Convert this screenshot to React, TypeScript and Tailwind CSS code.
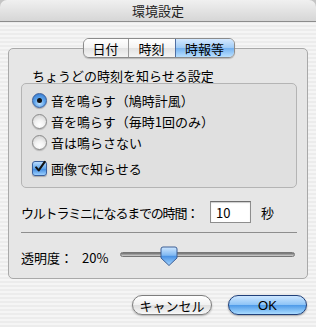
import React from "react"

const font = { fontFamily: '"Noto Sans CJK JP", "Liberation Sans", sans-serif' }

function Radio({ checked, label }: { checked?: boolean; label: string }) {
  return (
    <div className="flex items-center gap-[4px] h-[21px]">
      {checked ? (
        <span className="w-[15px] h-[15px] rounded-full border border-[#3a5f9c] bg-[radial-gradient(circle_at_50%_70%,#c8e6ff_0%,#5fa4ea_45%,#2a6fc9_100%)] flex items-center justify-center shadow-[0_1px_1px_rgba(0,0,0,0.25)]">
          <span className="w-[5px] h-[5px] rounded-full bg-[#111]" />
        </span>
      ) : (
        <span className="w-[15px] h-[15px] rounded-full border border-[#8a8a8a] bg-[radial-gradient(circle_at_50%_75%,#ffffff_0%,#f2f2f2_40%,#c9c9c9_100%)] shadow-[0_1px_1px_rgba(0,0,0,0.2)]" />
      )}
      <span className="text-[13px] text-black leading-none whitespace-nowrap">{label}</span>
    </div>
  )
}

export default function App() {
  return (
    <div style={font} className="w-[316px] h-[327px] flex flex-col bg-[#c4c4c4] overflow-hidden">
      {/* Title bar */}
      <div className="h-[22px] shrink-0 rounded-t-[7px] bg-[linear-gradient(#f0f0f0,#d6d6d6)] border-b border-[#8c8c8c] flex items-center justify-center">
        <span className="text-[13px] text-[#222] leading-none">環境設定</span>
      </div>

      {/* Body */}
      <div className="flex-1 flex flex-col bg-[repeating-linear-gradient(0deg,#ececec_0px,#ececec_2px,#f5f5f5_2px,#f5f5f5_4px)] px-[8px] pt-[16px]">
        {/* Tabs */}
        <div className="relative z-10 flex justify-center">
          <div className="flex h-[20px] rounded-[6px] border border-[#8b8b8b] overflow-hidden shadow-[0_1px_1px_rgba(0,0,0,0.2)] text-[13px] leading-none ml-[1px]">
            <div className="w-[45px] flex items-center justify-center bg-[linear-gradient(#ffffff,#f3f3f3_50%,#e2e2e2_51%,#f4f4f4)] border-r border-[#9a9a9a]">日付</div>
            <div className="w-[47px] flex items-center justify-center bg-[linear-gradient(#ffffff,#f3f3f3_50%,#e2e2e2_51%,#f4f4f4)] border-r border-[#4f6fa3]">時刻</div>
            <div className="w-[58px] flex items-center justify-center bg-[linear-gradient(#d4e9ff,#9fcaf5_50%,#74b1f0_51%,#b9e0ff)] text-black">時報等</div>
          </div>
        </div>

        {/* Panel */}
        <div className="-mt-[10px] h-[231px] w-[300px] shrink-0 rounded-[5px] border border-[#a9a9a9] bg-[#e6e6e6] flex flex-col px-[12px] pt-[20px]">
          <div className="text-[13px] leading-none h-[14px] pl-[11px] whitespace-nowrap">ちょうどの時刻を知らせる設定</div>
          <div className="h-[105px] w-[276px] shrink-0 rounded-[5px] border border-[#b4b4b4] bg-[#e0e0e0] flex flex-col pl-[10px] pt-[6px]">
            <Radio checked label="音を鳴らす（鳩時計風）" />
            <Radio label="音を鳴らす（毎時1回のみ）" />
            <Radio label="音は鳴らさない" />
            <div className="flex items-center gap-[4px] h-[21px] mt-[5px]">
              <span className="w-[15px] h-[15px] rounded-[3px] border border-[#3a5f9c] bg-[linear-gradient(#b9dcff,#5fa4ea_50%,#3b86dc_51%,#9cd0ff)] flex items-center justify-center shadow-[0_1px_1px_rgba(0,0,0,0.25)]">
                <svg width="14" height="14" viewBox="0 0 14 14" className="-mt-[3px] ml-[1px]">
                  <path d="M2.5 7.5 L5.5 11 L12.5 1" fill="none" stroke="#111" strokeWidth="2.4" strokeLinecap="round" strokeLinejoin="round" />
                </svg>
              </span>
              <span className="text-[13px] leading-none">画像で知らせる</span>
            </div>
          </div>

          {/* Time row */}
          <div className="mt-[13px] flex items-center h-[22px]">
            <span className="text-[13px] leading-none w-[189px] whitespace-nowrap tracking-[-1.2px]">ウルトラミニになるまでの時間：</span>
            <div className="w-[41px] h-[22px] bg-white border border-[#8e8e8e] border-t-[#6e6e6e] shadow-[inset_0_1px_1px_rgba(0,0,0,0.2)] flex items-center pl-[5px] text-[13px] leading-none">10</div>
            <span className="text-[13px] leading-none ml-[10px]">秒</span>
          </div>

          <div className="mt-[9px] h-px bg-[#8e8e8e] w-[276px] shrink-0" />

          {/* Slider row */}
          <div className="mt-[14px] flex items-center h-[20px]">
            <span className="text-[13px] leading-none w-[62px] mt-[1px]">透明度：</span>
            <span className="text-[13px] leading-none w-[38px] mt-[1px]">20%</span>
            <div className="relative w-[178px] h-[20px] flex items-center">
              <div className="w-full h-[5px] rounded-full bg-[linear-gradient(#6e6e6e,#a8a8a8_60%,#d6d6d6)] border border-[#777] -mt-[6px]" />
              <svg width="18" height="21" viewBox="0 0 18 21" className="absolute left-[40px] -top-[1px]">
                <defs>
                  <linearGradient id="thumb" x1="0" y1="0" x2="0" y2="1">
                    <stop offset="0" stopColor="#cfe7ff" />
                    <stop offset="0.45" stopColor="#7fb8f2" />
                    <stop offset="0.5" stopColor="#4a92e4" />
                    <stop offset="1" stopColor="#a6d6ff" />
                  </linearGradient>
                </defs>
                <path d="M3 1 H15 Q17 1 17 3 V12 L9 19.5 L1 12 V3 Q1 1 3 1 Z" fill="url(#thumb)" stroke="#3c5e95" strokeWidth="1" />
              </svg>
            </div>
          </div>
        </div>

        {/* Buttons */}
        <div className="mt-[16px] flex justify-end gap-[16px] pr-[1px]">
          <button className="w-[80px] h-[20px] rounded-full border border-[#7d7d7d] bg-[linear-gradient(#ffffff,#f1f1f1_50%,#dedede_51%,#f7f7f7)] shadow-[0_1px_2px_rgba(0,0,0,0.3)] text-[13px] leading-none flex items-center justify-center">キャンセル</button>
          <button className="w-[79px] h-[20px] rounded-full border border-[#20407a] bg-[linear-gradient(#cde6ff,#8cc3f6_50%,#4e9ae8_51%,#a9dbff)] shadow-[0_1px_2px_rgba(0,0,0,0.35)] text-[13px] leading-none flex items-center justify-center" style={{ fontFamily: '"Liberation Sans", sans-serif' }}>OK</button>
        </div>
      </div>
    </div>
  )
}
